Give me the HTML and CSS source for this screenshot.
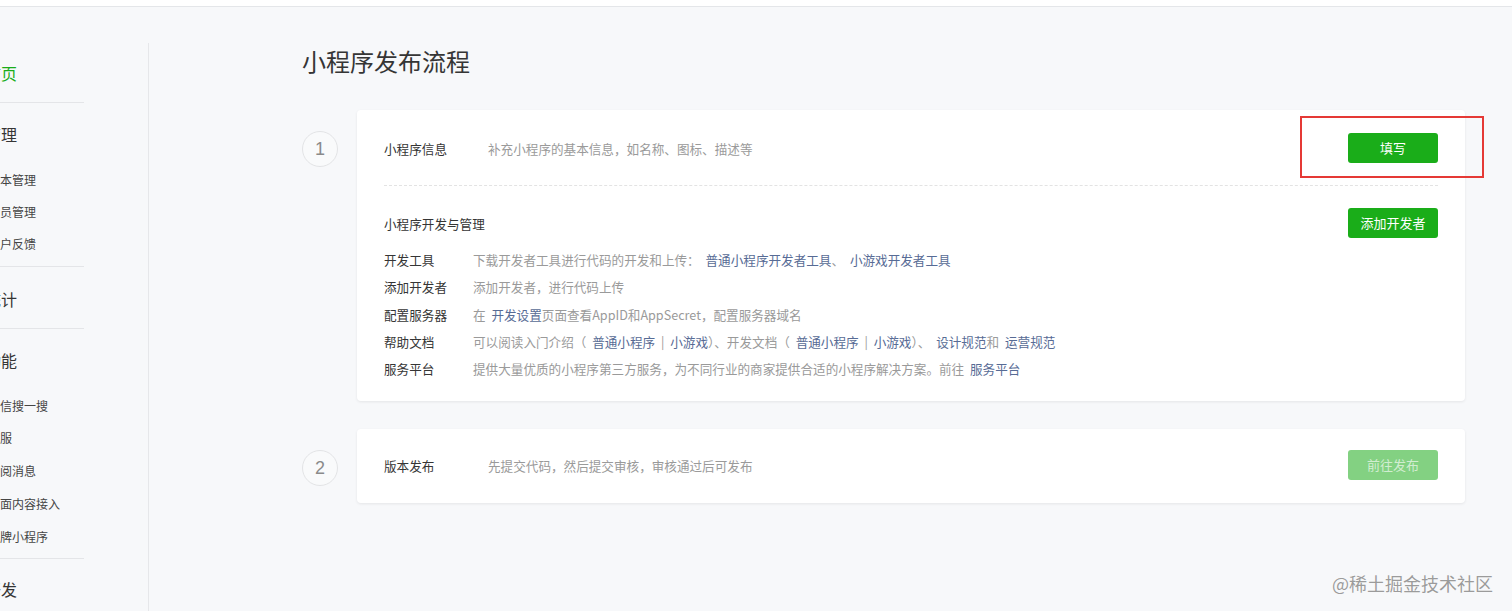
FILE: index.html
```html
<!DOCTYPE html>
<html lang="zh-CN">
<head>
<meta charset="utf-8">
<title>小程序发布流程</title>
<link rel="stylesheet" href="styles.css">
</head>
<body>
<div class="topbar"></div>
<div class="layout">
  <aside class="sidebar">
    <nav class="nav">
      <div class="nav-group g-home">
        <div class="nav-head active">首页</div>
      </div>
      <div class="nav-group g-manage">
        <div class="nav-head">管理</div>
        <div class="nav-sub">版本管理</div>
        <div class="nav-sub">成员管理</div>
        <div class="nav-sub">用户反馈</div>
      </div>
      <div class="nav-group g-stat">
        <div class="nav-head">统计</div>
      </div>
      <div class="nav-group g-func">
        <div class="nav-head">功能</div>
        <div class="nav-sub">微信搜一搜</div>
        <div class="nav-sub">客服</div>
        <div class="nav-sub">订阅消息</div>
        <div class="nav-sub">页面内容接入</div>
        <div class="nav-sub">品牌小程序</div>
      </div>
      <div class="nav-group g-dev">
        <div class="nav-head">开发</div>
      </div>
    </nav>
  </aside>

  <main class="main">
    <h1 class="title">小程序发布流程</h1>

    <section class="step">
      <div class="step-num">1</div>
      <div class="card">
        <div class="info-row dashed">
          <span class="label">小程序信息</span>
          <span class="desc">补充小程序的基本信息，如名称、图标、描述等</span>
          <span class="btn-wrap">
            <a class="btn">填写</a>
            <span class="mark"></span>
          </span>
        </div>
        <div class="dev-head">
          <span class="label-dark">小程序开发与管理</span>
          <a class="btn">添加开发者</a>
        </div>
        <ul class="dev-list">
          <li><span class="dev-label">开发工具</span><span class="desc">下载开发者工具进行代码的开发和上传： <a class="link">普通小程序开发者工具</a>、 <a class="link">小游戏开发者工具</a></span></li>
          <li><span class="dev-label">添加开发者</span><span class="desc">添加开发者，进行代码上传</span></li>
          <li><span class="dev-label">配置服务器</span><span class="desc">在 <a class="link">开发设置</a>页面查看AppID和AppSecret，配置服务器域名</span></li>
          <li><span class="dev-label">帮助文档</span><span class="desc">可以阅读入门介绍（ <a class="link">普通小程序</a> | <a class="link">小游戏</a>）、开发文档（ <a class="link">普通小程序</a> | <a class="link">小游戏</a>）、 <a class="link">设计规范</a>和 <a class="link">运营规范</a></span></li>
          <li><span class="dev-label">服务平台</span><span class="desc">提供大量优质的小程序第三方服务，为不同行业的商家提供合适的小程序解决方案。前往 <a class="link">服务平台</a></span></li>
        </ul>
      </div>
    </section>

    <section class="step">
      <div class="step-num">2</div>
      <div class="card card-single">
        <div class="info-row">
          <span class="label">版本发布</span>
          <span class="desc">先提交代码，然后提交审核，审核通过后可发布</span>
          <a class="btn btn-disabled">前往发布</a>
        </div>
      </div>
    </section>
  </main>
</div>
<div class="watermark">@稀土掘金技术社区</div>
</body>
</html>
```

FILE: styles.css
```css
* { box-sizing: border-box; }

html, body {
  margin: 0;
  padding: 0;
  overflow: hidden;
}

body {
  background: #f7f8fa;
  font-family: "Noto Sans CJK SC", "Microsoft YaHei", sans-serif;
  color: #353535;
}

.topbar {
  height: 7px;
  background: #fff;
  border-bottom: 1px solid #e4e6e9;
}

.layout {
  display: flex;
  height: calc(100vh - 7px);
  overflow: hidden;
}

/* ---------- sidebar ---------- */
.sidebar {
  width: 149px;
  flex: 0 0 149px;
  margin-top: 36px;
  border-right: 1px solid #e6e7ea;
}

.nav {
  width: 84px;
}

.nav-group {
  border-bottom: 1px solid #e4e5e8;
}

.nav-head {
  margin-left: -15px;
  height: 56px;
  line-height: 56px;
  font-size: 16px;
  color: #353535;
  white-space: nowrap;
}

.nav-head.active { color: #1aad19; }

.nav-sub {
  margin-left: -12px;
  height: 32px;
  line-height: 32px;
  padding-top: 2px;
  font-size: 12px;
  color: #454545;
  white-space: nowrap;
  box-sizing: content-box;
  margin-bottom: -2px;
}

.g-home { padding: 2px 0 1px; }
.g-manage { padding: 3px 0 10px; }
.g-manage .nav-sub:last-child { margin-bottom: -4px; }
.g-stat { padding: 4px 0 1px; }
.g-func { padding: 4px 0 9px; }
.g-func .nav-head { height: 54px; line-height: 54px; }
.g-func .nav-sub { height: 32.75px; line-height: 32.75px; padding-top: 2.5px; margin-bottom: -2.5px; }
.g-func .nav-sub:last-child { margin-bottom: -4.5px; }
.g-dev { padding: 2px 0 0; border-bottom: none; }

/* ---------- main ---------- */
.main {
  flex: 1;
  padding: 37px 47px 0 153px;
}

.title {
  margin: 0 0 32px;
  font-size: 24px;
  line-height: 34px;
  font-weight: normal;
  color: #353535;
}

.step {
  display: flex;
  align-items: flex-start;
  margin-bottom: 28px;
}

.step-num {
  flex: 0 0 36px;
  width: 36px;
  height: 36px;
  margin: 21px 19px 0 0;
  border: 1px solid #e3e4e6;
  border-radius: 50%;
  background: #f9fafb;
  text-align: center;
  line-height: 34px;
  font-size: 18px;
  color: #8a8a8a;
  font-family: "Liberation Sans", Arial, sans-serif;
}

.card {
  flex: 1;
  background: #fff;
  border-radius: 4px;
  box-shadow: 0 1px 3px rgba(0, 0, 0, 0.08);
  padding: 0 27px 19px;
}

.card-single {
  padding: 21px 27px 23px;
}

.info-row {
  display: flex;
  align-items: center;
  font-size: 12.6px;
}

.info-row.dashed {
  padding: 23px 0 22px;
  border-bottom: 1px dashed #e3e3e3;
}

.label {
  flex: 0 0 104px;
  color: #353535;
  padding-top: 1px;
}

.desc {
  color: #9a9a9a;
  white-space: nowrap;
  word-spacing: 3px;
}

.info-row .desc { padding-top: 1px; }

.link {
  color: #576b95;
  text-decoration: none;
}

.btn {
  display: inline-block;
  width: 90px;
  height: 30px;
  line-height: 30px;
  text-align: center;
  font-size: 13px;
  color: #fff;
  background: #1aad19;
  border-radius: 3px;
  text-decoration: none;
  flex: 0 0 auto;
}

.btn-disabled {
  margin-left: auto;
  background: #83d182;
  color: rgba(255, 255, 255, 0.65);
}

.btn-wrap {
  position: relative;
  margin-left: auto;
  display: flex;
}

.mark {
  position: absolute;
  top: -17px;
  bottom: -15px;
  left: -48px;
  right: -46px;
  border: 2px solid #e53935;
  pointer-events: none;
}

.dev-head {
  display: flex;
  align-items: center;
  justify-content: space-between;
  padding-top: 22px;
  font-size: 12.6px;
}

.label-dark { color: #353535; }

.dev-list {
  list-style: none;
  margin: 8px 0 0;
  padding: 0;
  font-size: 12.6px;
}

.dev-list li {
  display: flex;
  height: 27.3px;
  line-height: 27.3px;
}

.dev-label {
  flex: 0 0 89px;
  color: #353535;
}

/* ---------- watermark ---------- */
.watermark {
  position: absolute;
  right: 19px;
  bottom: 16px;
  font-size: 18px;
  line-height: 24px;
  color: #9b9b9b;
  text-shadow: 0 0 1px #fff, 0 0 1px #fff;
}
```
